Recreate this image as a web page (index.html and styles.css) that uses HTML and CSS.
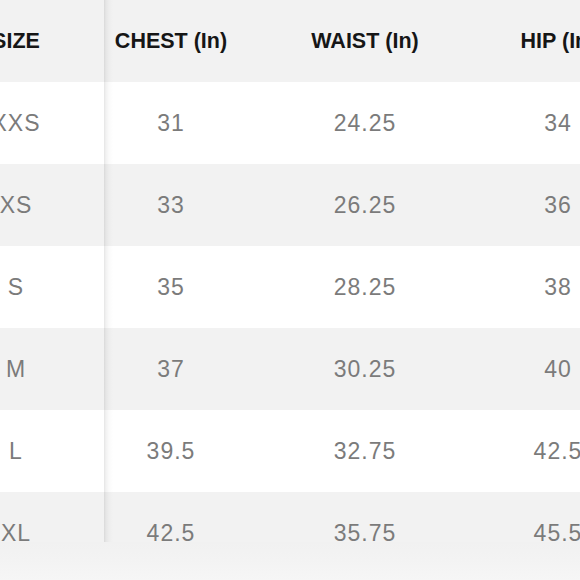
FILE: index.html
```html
<!DOCTYPE html>
<html lang="en">
<head>
<meta charset="utf-8">
<title>Size Chart</title>
<link rel="stylesheet" href="styles.css">
</head>
<body>
<div class="sheet">
  <div class="chart">
    <div class="row head">
      <div class="cell c-size">SIZE</div>
      <div class="cell c-chest">CHEST (In)</div>
      <div class="cell c-waist">WAIST (In)</div>
      <div class="cell c-hip">HIP (In)</div>
    </div>
    <div class="row">
      <div class="cell c-size">XXS</div>
      <div class="cell c-chest">31</div>
      <div class="cell c-waist">24.25</div>
      <div class="cell c-hip">34</div>
    </div>
    <div class="row alt">
      <div class="cell c-size">XS</div>
      <div class="cell c-chest">33</div>
      <div class="cell c-waist">26.25</div>
      <div class="cell c-hip">36</div>
    </div>
    <div class="row">
      <div class="cell c-size">S</div>
      <div class="cell c-chest">35</div>
      <div class="cell c-waist">28.25</div>
      <div class="cell c-hip">38</div>
    </div>
    <div class="row alt">
      <div class="cell c-size">M</div>
      <div class="cell c-chest">37</div>
      <div class="cell c-waist">30.25</div>
      <div class="cell c-hip">40</div>
    </div>
    <div class="row">
      <div class="cell c-size">L</div>
      <div class="cell c-chest">39.5</div>
      <div class="cell c-waist">32.75</div>
      <div class="cell c-hip">42.5</div>
    </div>
    <div class="row alt">
      <div class="cell c-size">XL</div>
      <div class="cell c-chest">42.5</div>
      <div class="cell c-waist">35.75</div>
      <div class="cell c-hip">45.5</div>
    </div>
  </div>
</div>
</body>
</html>
```
FILE: styles.css
```css
html, body {
  margin: 0;
  padding: 0;
}
body {
  width: 580px;
  height: 580px;
  overflow: hidden;
  background: linear-gradient(to bottom, #f1f1f1 0, #f1f1f1 542px, #f3f3f3 560px, #f6f6f6 580px);
  font-family: "Liberation Sans", Arial, Helvetica, sans-serif;
}
.sheet {
  height: 542px;
  overflow: hidden;
  background: #fff;
}
.chart {
  margin-left: -72px;
  width: 696px;
  display: flex;
  flex-direction: column;
}
.row {
  display: flex;
  height: 82px;
  background: #fff;
}
.row.alt,
.row.head {
  background: #f2f2f2;
}
.cell {
  display: flex;
  align-items: center;
  justify-content: center;
  font-size: 23px;
  letter-spacing: 1px;
  color: #7b7b7b;
  white-space: nowrap;
}
.head .cell {
  font-size: 21.5px;
  font-weight: bold;
  letter-spacing: 0;
  color: #161616;
  padding-top: 1px;
}
.c-size {
  width: 176px;
  flex: none;
}
.c-chest {
  width: 134px;
  flex: none;
  background: linear-gradient(to right, rgba(0,0,0,0.10) 0, rgba(0,0,0,0.05) 2px, rgba(0,0,0,0.02) 5px, rgba(0,0,0,0) 9px);
}
.c-waist {
  width: 254px;
  flex: none;
}
.c-hip {
  width: 132px;
  flex: none;
}
```
